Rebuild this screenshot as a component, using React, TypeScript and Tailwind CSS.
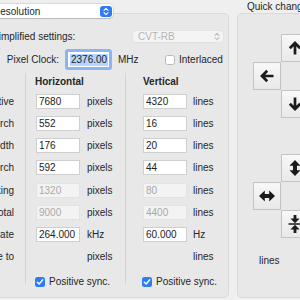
import React from 'react';

type Row = {
  label: string;
  h: string | null;
  v: string | null;
  hu: string;
  vu: string;
  disabled?: boolean;
};

const ROWS: Row[] = [
  { label: 'Active', h: '7680', v: '4320', hu: 'pixels', vu: 'lines' },
  { label: 'Front porch', h: '552', v: '16', hu: 'pixels', vu: 'lines' },
  { label: 'Sync width', h: '176', v: '20', hu: 'pixels', vu: 'lines' },
  { label: 'Back porch', h: '592', v: '44', hu: 'pixels', vu: 'lines' },
  { label: 'Blanking', h: '1320', v: '80', hu: 'pixels', vu: 'lines', disabled: true },
  { label: 'Total', h: '9000', v: '4400', hu: 'pixels', vu: 'lines', disabled: true },
  { label: 'Scan rate', h: '264.000', v: '60.000', hu: 'kHz', vu: 'Hz' },
  { label: 'Scale to', h: null, v: null, hu: 'pixels', vu: 'lines' },
];

const Field: React.FC<{ value: string | null; disabled?: boolean }> = ({ value, disabled }) => {
  if (value === null) return <div className="w-[44px] h-[15px]" />;
  return (
    <div
      className={
        disabled
          ? 'w-[44px] h-[15px] flex items-center px-[2px] bg-[#f3f3f3] border border-[#e3e3e3] text-[#a9a9a9]'
          : 'w-[44px] h-[15px] flex items-center px-[2px] bg-white border border-[#cfcfcf] text-[#222]'
      }
    >
      {value}
    </div>
  );
};

const Checkbox: React.FC<{ checked?: boolean }> = ({ checked }) =>
  checked ? (
    <div className="w-[10px] h-[10px] rounded-[2.5px] bg-[#2f7bf5] flex items-center justify-center">
      <svg width="8" height="8" viewBox="0 0 8 8">
        <path d="M1.3 4.2 3.2 6 6.7 1.8" fill="none" stroke="white" strokeWidth="1.4" strokeLinecap="round" strokeLinejoin="round" />
      </svg>
    </div>
  ) : (
    <div className="w-[10px] h-[10px] rounded-[2.5px] bg-white border border-[#b9b9b9]" />
  );

const Chevrons: React.FC<{ color: string }> = ({ color }) => (
  <svg width="6" height="9" viewBox="0 0 6 9">
    <path d="M1 3.3 3 1.3 5 3.3M1 5.7 3 7.7 5 5.7" fill="none" stroke={color} strokeWidth="1.1" strokeLinecap="round" strokeLinejoin="round" />
  </svg>
);

const ArrowIcon: React.FC<{ rotate?: number }> = ({ rotate = 0 }) => (
  <svg width="16" height="16" viewBox="0 0 16 16" style={{ transform: `rotate(${rotate}deg)` }}>
    <path d="M8 14.5V3M2.8 8.2 8 3l5.2 5.2" fill="none" stroke="#1b1b1b" strokeWidth="2.7" />
  </svg>
);

const DoubleArrow: React.FC<{ rotate?: number }> = ({ rotate = 0 }) => (
  <svg width="18" height="18" viewBox="0 0 18 18" style={{ transform: `rotate(${rotate}deg)` }}>
    <path d="M9 1 14.5 6.8H11V11.2H14.5L9 17 3.5 11.2H7V6.8H3.5Z" fill="#1b1b1b" />
  </svg>
);

const Compress: React.FC = () => (
  <svg width="18" height="18" viewBox="0 0 18 18">
    <path d="M7.6 0H10.4V3.6H13.6L9 8.2 4.4 3.6H7.6ZM7.6 18H10.4V14.4H13.6L9 9.8 4.4 14.4H7.6ZM2.5 8.2H15.5V9.8H2.5Z" fill="#1b1b1b" />
  </svg>
);

const Btn: React.FC<{ className: string; children?: React.ReactNode }> = ({ className, children }) => (
  <div
    className={`${className} flex items-center justify-center border border-[#c3c3c3] bg-gradient-to-b from-[#f8f8f8] to-[#e9e9e9]`}
  >
    {children}
  </div>
);

export default function App() {
  return (
    <div className="w-[300px] h-[300px] overflow-hidden bg-[#efefef] font-['Liberation_Sans',Arial,sans-serif] text-[10px] text-[#262626]">
      <div className="flex -ml-[90px] gap-[8px]">
        {/* left group */}
        <div className="w-[319px] shrink-0 flex flex-col pt-[4px]">
          <div className="relative z-10 ml-[76px] w-[127px] h-[14px] rounded-[4px] bg-white shadow-[0_0_0_0.5px_rgba(0,0,0,0.18),0_1px_1px_rgba(0,0,0,0.12)] flex items-center justify-between pl-[7px] pr-[1.5px]">
            <span>Resolution</span>
            <div className="w-[12px] h-[11px] rounded-[3px] bg-[#2f7bf5] flex items-center justify-center">
              <Chevrons color="white" />
            </div>
          </div>
          <div className="-mt-[5px] h-[285px] rounded-[5px] border border-[#dadada] bg-[#e8e8e8] pt-[16px]">
            <div className="flex items-center h-[13px]">
              <span className="ml-[81px]">Simplified settings:</span>
              <div className="ml-auto mr-[4px] w-[92px] h-[13px] rounded-[4px] bg-[#f4f4f4] border border-[#e3e3e3] flex items-center justify-between pl-[5px] pr-[3px] text-[#b6b6b6]">
                <span>CVT-RB</span>
                <Chevrons color="#bdbdbd" />
              </div>
            </div>

            <div className="flex items-center h-[21px] mt-[6px]">
              <span className="w-[148px] text-right">Pixel Clock:</span>
              <div className="ml-[6px] w-[47px] h-[21px] rounded-[3px] bg-[#8db3f3] p-[3px]">
                <div className="w-full h-full bg-white flex items-center px-[2px]">
                  <span className="bg-[#b5d5fd] px-[1px] leading-[12px] text-[#1c1c1c]">2376.00</span>
                </div>
              </div>
              <span className="ml-[6px] w-[47px]">MHz</span>
              <Checkbox />
              <span className="ml-[4px]">Interlaced</span>
            </div>

            <div className="flex mt-[3px]">
              <div className="w-[114px] pr-[11px] text-right">
                <div className="h-[17px]" />
                {ROWS.map((r) => (
                  <div key={r.label} className="h-[22.25px] flex items-center justify-end">
                    {r.label}
                  </div>
                ))}
                <div className="h-[16px]" />
              </div>

              <div className="w-[100px] border-l border-[#d3d3d3] pl-[10px]">
                <div className="h-[17px] flex items-center font-bold -ml-[1px]">Horizontal</div>
                {ROWS.map((r) => (
                  <div key={r.label} className="h-[22.25px] flex items-center">
                    <Field value={r.h} disabled={r.disabled} />
                    <span className="ml-[7px]">{r.hu}</span>
                  </div>
                ))}
                <div className="h-[16px] pt-[9px] flex items-start -ml-[1px]">
                  <Checkbox checked />
                  <span className="ml-[4px] leading-[10px] whitespace-nowrap">Positive sync.</span>
                </div>
              </div>

              <div className="flex-1 border-l border-[#d3d3d3] pl-[17px]">
                <div className="h-[17px] flex items-center font-bold">Vertical</div>
                {ROWS.map((r) => (
                  <div key={r.label} className="h-[22.25px] flex items-center">
                    <Field value={r.v} disabled={r.disabled} />
                    <span className="ml-[6px]">{r.vu}</span>
                  </div>
                ))}
                <div className="h-[16px] pt-[9px] flex items-start -ml-[1px]">
                  <Checkbox checked />
                  <span className="ml-[4px] leading-[10px] whitespace-nowrap">Positive sync.</span>
                </div>
              </div>
            </div>
          </div>
        </div>

        {/* right group */}
        <div className="w-[120px] shrink-0 flex flex-col">
          <div className="h-[13px] flex items-center pl-[10px] whitespace-nowrap">Quick change</div>
          <div className="h-[285px] rounded-[5px] border border-[#dadada] bg-[#e8e8e8] pt-[20px] pl-[15px]">
            <div className="grid grid-cols-[28px_28px_28px] grid-rows-[28px_28px_28px]">
              <Btn className="col-start-2 row-start-1">
                <ArrowIcon />
              </Btn>
              <Btn className="col-start-1 row-start-2">
                <ArrowIcon rotate={-90} />
              </Btn>
              <Btn className="col-start-3 row-start-2">
                <ArrowIcon rotate={90} />
              </Btn>
              <Btn className="col-start-2 row-start-3">
                <ArrowIcon rotate={180} />
              </Btn>
            </div>
            <div className="mt-[36px] grid grid-cols-[28px_28px_28px] grid-rows-[28px_28px_28px]">
              <Btn className="col-start-2 row-start-1">
                <DoubleArrow />
              </Btn>
              <Btn className="col-start-1 row-start-2">
                <DoubleArrow rotate={90} />
              </Btn>
              <Btn className="col-start-3 row-start-2">
                <Compress />
              </Btn>
              <Btn className="col-start-2 row-start-3">
                <Compress />
              </Btn>
            </div>
            <div className="mt-[16px] pl-[6px] h-[12px] flex items-center">lines</div>
          </div>
        </div>
      </div>
    </div>
  );
}
